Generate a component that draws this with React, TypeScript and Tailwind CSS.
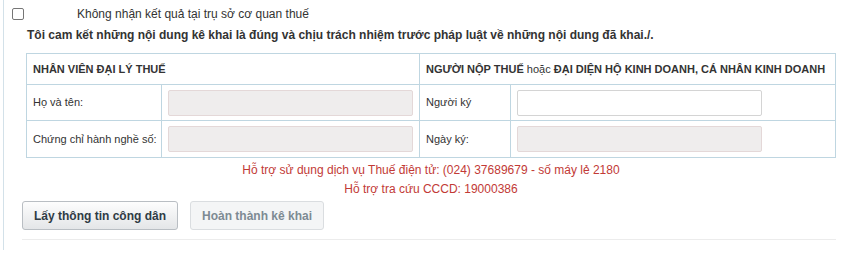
import React from "react";

const cell = "border border-[#bfd6e1] px-[6px] align-middle";
const label = cell + " whitespace-nowrap text-[11px]";

function Field({ disabled, className }: { disabled?: boolean; className?: string }) {
  return (
    <input
      type="text"
      disabled={disabled}
      className={
        "block h-[26px] rounded-[2px] border px-2 text-[12px] outline-none " +
        (disabled ? "border-[#e4d8d8] bg-[#efeded] " : "border-[#d4d4d4] bg-white ") +
        (className ?? "")
      }
    />
  );
}

export default function App() {
  return (
    <div className="h-[255px] w-[844px] bg-white font-['Liberation_Sans',Arial,sans-serif] text-[#333]">
      <div className="ml-[3px] h-[250px] border-l border-[#d3e1e9] pr-[8px]">
        <div className="flex h-[27px] items-start pt-[7px]">
          <span className="ml-[8px] mt-[1px] block h-[12px] w-[12px] rounded-[2px] border border-[#767676] bg-white" />
          <span className="ml-[53px] text-[12px] leading-[14px]">
            Không nhận kết quả tại trụ sở cơ quan thuế
          </span>
        </div>
        <p className="ml-[23px] text-[12px] font-bold leading-[16px]">
          Tôi cam kết những nội dung kê khai là đúng và chịu trách nhiệm trước pháp luật về những nội dung đã khai./.
        </p>

        <div className="ml-[22px] mt-[10px] w-[810px]">
          <table className="w-full table-fixed border-collapse text-[11px]">
            <colgroup>
              <col className="w-[135px]" />
              <col className="w-[258px]" />
              <col className="w-[91px]" />
              <col />
            </colgroup>
            <tbody>
              <tr className="h-[31px]">
                <td colSpan={2} className={cell + " font-bold"}>
                  NHÂN VIÊN ĐẠI LÝ THUẾ
                </td>
                <td colSpan={2} className={cell + " font-bold"}>
                  NGƯỜI NỘP THUẾ <span className="font-normal">hoặc</span> ĐẠI DIỆN HỘ KINH DOANH, CÁ NHÂN KINH DOANH
                </td>
              </tr>
              <tr className="h-[36px]">
                <td className={label}>Họ và tên:</td>
                <td className={cell}>
                  <Field disabled className="w-full" />
                </td>
                <td className={label}>Người ký</td>
                <td className={cell}>
                  <Field className="w-[245px]" />
                </td>
              </tr>
              <tr className="h-[37px]">
                <td className={label}>Chứng chỉ hành nghề số:</td>
                <td className={cell}>
                  <Field disabled className="w-full" />
                </td>
                <td className={label}>Ngày ký:</td>
                <td className={cell}>
                  <Field disabled className="w-[245px]" />
                </td>
              </tr>
            </tbody>
          </table>

          <div className="mt-[3px] text-center text-[12px] leading-[19px] text-[#c23a36]">
            <p>Hỗ trợ sử dụng dịch vụ Thuế điện tử: (024) 37689679 - số máy lẻ 2180</p>
            <p>Hỗ trợ tra cứu CCCD: 19000386</p>
          </div>
        </div>

        <div className="ml-[18px] mt-[2px] flex gap-[12px]">
          <button className="h-[29px] w-[156px] rounded-[3px] border border-[#b9bec3] bg-gradient-to-b from-[#fdfdfd] to-[#e4e6e8] text-[12px] font-bold text-[#2f3b45]">
            Lấy thông tin công dân
          </button>
          <button className="h-[29px] w-[134px] rounded-[3px] border border-[#dadde0] bg-[#f4f5f6] text-[12px] font-bold text-[#7d8a93]">
            Hoàn thành kê khai
          </button>
        </div>

        <div className="ml-[18px] mt-[9px] border-t border-[#ececec]" />
      </div>
    </div>
  );
}
